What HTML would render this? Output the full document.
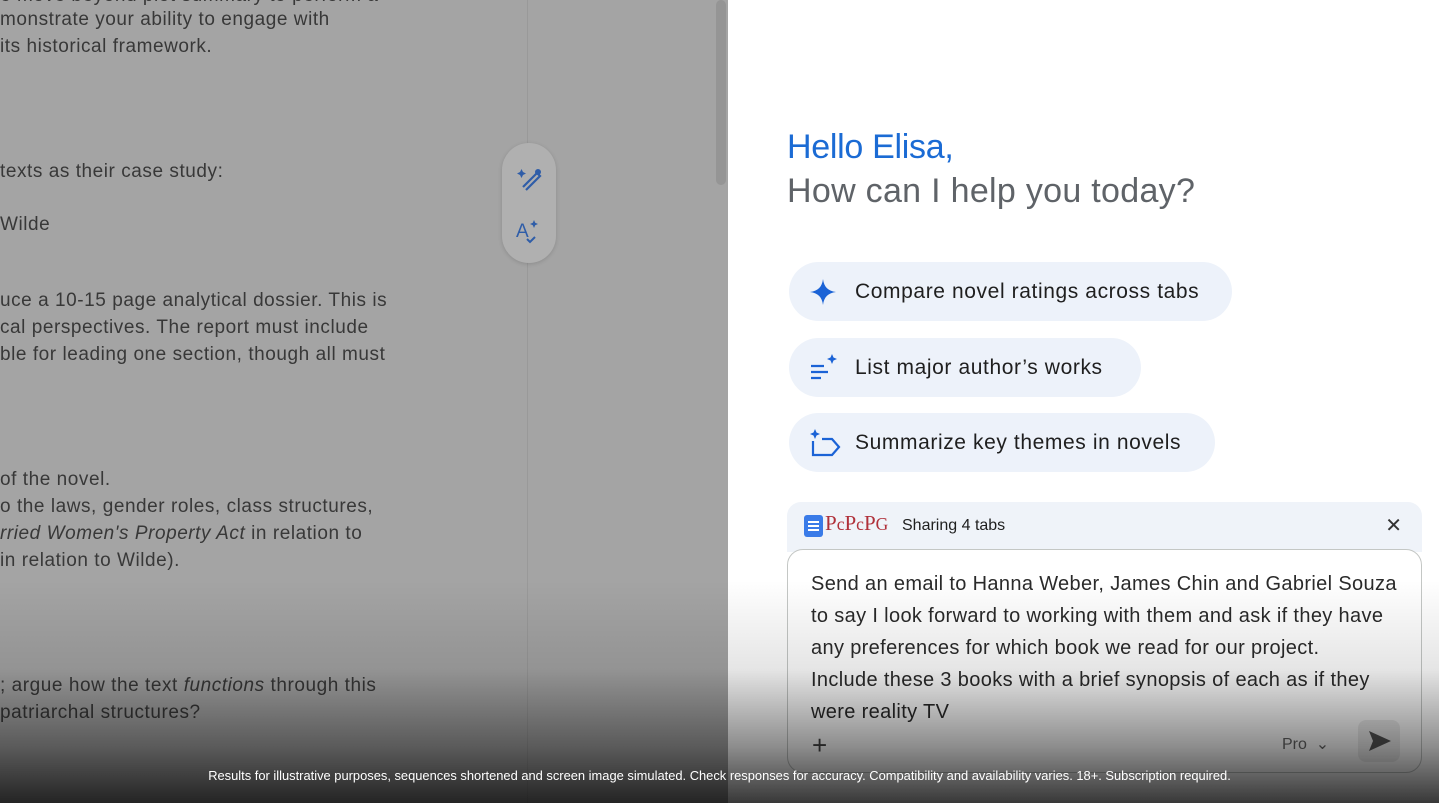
<!DOCTYPE html>
<html><head><meta charset="utf-8"><style>
*{margin:0;padding:0;box-sizing:border-box}
body{width:1439px;height:803px;overflow:hidden;position:relative;background:#fff;font-family:"Liberation Sans",Arial,sans-serif}
#left{position:absolute;left:0;top:0;width:728px;height:803px;background:#a4a4a4}
#left .sep{position:absolute;left:527px;top:0;width:1px;height:803px;background:#999}
#left .sb{position:absolute;left:716px;top:0;width:10px;height:185px;background:#959595;border-radius:5px}
.lt{position:absolute;left:0;font-size:19px;letter-spacing:.55px;color:#383838;white-space:nowrap;line-height:20px}
#tools{position:absolute;left:502px;top:143px;width:54px;height:120px;background:#b0b0b0;border-radius:27px;box-shadow:0 1px 4px rgba(0,0,0,.15)}
#right{position:absolute;left:728px;top:0;width:711px;height:803px;background:#fff}
h1{position:absolute;left:787px;top:128px;font-size:34px;font-weight:400;color:#1b6bd4;letter-spacing:-.3px}
h2{position:absolute;left:787px;top:172px;font-size:34px;font-weight:400;color:#5f6368;letter-spacing:.3px}
.chip{position:absolute;left:789px;height:59px;background:#edf2fa;border-radius:30px;font-size:21px;letter-spacing:.6px;color:#1f1f1f;display:flex;align-items:center;padding-left:66px}
.chip svg{position:absolute;left:20px;top:16px}
#share{position:absolute;left:787px;top:502px;width:635px;height:50px;background:#eff3f9;border-radius:14px 14px 0 0;font-size:16px;color:#1f1f1f}
#box{position:absolute;left:787px;top:549px;width:635px;height:224px;border:1px solid #c4c7c5;border-radius:16px;background:#fff}
#box p{position:absolute;left:23px;top:18px;font-size:20px;letter-spacing:.35px;line-height:32px;color:#2a2a2a;white-space:nowrap}
#shade{position:absolute;left:0;top:580px;width:1439px;height:223px;background:linear-gradient(to bottom,rgba(0,0,0,0) 0%,rgba(0,0,0,.1) 40%,rgba(0,0,0,.45) 75%,rgba(0,0,0,.78) 100%)}
#foot{position:absolute;left:0;top:768px;width:1439px;text-align:center;color:#fff;font-size:12.9px}
</style></head><body>
<div id="left">
<div class="sep"></div><div class="sb"></div>
<div class="lt" style="top:-14px">e move beyond plot summary to perform a</div>
<div class="lt" style="top:10px">monstrate your ability to engage with</div>
<div class="lt" style="top:37px">its historical framework.</div>
<div class="lt" style="top:162px">texts as their case study:</div>
<div class="lt" style="top:215px">Wilde</div>
<div class="lt" style="top:291px">uce a 10-15 page analytical dossier. This is</div>
<div class="lt" style="top:318px">cal perspectives. The report must include</div>
<div class="lt" style="top:345px">ble for leading one section, though all must</div>
<div class="lt" style="top:470px">of the novel.</div>
<div class="lt" style="top:497px">o the laws, gender roles, class structures,</div>
<div class="lt" style="top:524px"><i>rried Women's Property Act</i> in relation to</div>
<div class="lt" style="top:551px">in relation to Wilde).</div>
<div class="lt" style="top:676px">; argue how the text <i>functions</i> through this</div>
<div class="lt" style="top:703px">patriarchal structures?</div>
<div id="tools">
<svg style="position:absolute;left:14px;top:20px" width="28" height="28" viewBox="0 0 28 28"><path d="M7 24 L21 10 L24 13 L10 27" fill="none" stroke="#2f5da8" stroke-width="2.2"/><path d="M4 6l1.5-3 1.5 3 3 1.5-3 1.5-1.5 3-1.5-3-3-1.5z" fill="#2f5da8" transform="translate(0,3)"/><circle cx="22" cy="9" r="3" fill="#2f5da8"/></svg>
<svg style="position:absolute;left:12px;top:74px" width="30" height="30" viewBox="0 0 30 30"><text x="2" y="20" font-size="19" font-family="Liberation Sans" fill="#2f5da8">A</text><path d="M20 3l1.2 2.8 2.8 1.2-2.8 1.2-1.2 2.8-1.2-2.8-2.8-1.2 2.8-1.2z" fill="#2f5da8"/><path d="M13 22l3 3 5-5" fill="none" stroke="#2f5da8" stroke-width="2"/></svg>
</div>
</div>
<div id="right"></div>
<h1>Hello Elisa,</h1>
<h2>How can I help you today?</h2>
<div class="chip" style="top:262px;width:443px"><svg width="28" height="28" viewBox="0 0 28 28"><path d="M14 1 C15 9 19 13 27 14 C19 15 15 19 14 27 C13 19 9 15 1 14 C9 13 13 9 14 1Z" fill="#1b63d6"/></svg>Compare novel ratings across tabs</div>
<div class="chip" style="top:338px;width:352px"><svg width="30" height="30" viewBox="0 0 30 30"><path d="M2 12h13M2 18h17M2 24h10" stroke="#1b63d6" stroke-width="2.2"/><path d="M23 0l1.5 3.5 3.5 1.5-3.5 1.5-1.5 3.5-1.5-3.5-3.5-1.5 3.5-1.5z" fill="#1b63d6"/></svg>List major author’s works</div>
<div class="chip" style="top:413px;width:426px"><svg width="32" height="30" viewBox="0 0 32 30"><path d="M4 12v14h19l7-8-7-8h-10" fill="none" stroke="#1b63d6" stroke-width="2.2"/><path d="M6 0l1.5 3.5 3.5 1.5-3.5 1.5-1.5 3.5-1.5-3.5-3.5-1.5 3.5-1.5z" fill="#1b63d6"/></svg>Summarize key themes in novels</div>
<div id="share">
<div style="position:absolute;left:17px;top:13px;width:19px;height:22px;background:#3a7be8;border-radius:3px"><div style="margin:6px 4px;height:2px;background:#fff;box-shadow:0 4px 0 #fff,0 8px 0 #fff"></div></div>
<div style="position:absolute;left:38px;top:9px;font-family:'Liberation Serif',serif;font-size:21px;color:#b0303a;letter-spacing:0px">P<small>c</small>P<small>c</small>P<small>G</small></div>
<div style="position:absolute;left:115px;top:15px">Sharing 4 tabs</div>
<div style="position:absolute;right:20px;top:11px;font-size:20px;color:#333">✕</div>
</div>
<div id="box"><p>Send an email to Hanna Weber, James Chin and Gabriel Souza<br>to say I look forward to working with them and ask if they have<br>any preferences for which book we read for our project.<br>Include these 3 books with a brief synopsis of each as if they<br>were reality TV</p>
<div style="position:absolute;left:24px;top:180px;font-size:26px;color:#444;font-weight:300">+</div>
<div style="position:absolute;left:494px;top:184px;font-size:16px;color:#666">Pro &nbsp;⌄</div>
<div style="position:absolute;left:570px;top:170px;width:42px;height:42px;background:#ececec;border-radius:8px"><svg style="margin:10px" width="24" height="22" viewBox="0 0 24 22"><path d="M1 1 L23 11 L1 21 L5 11Z" fill="#555"/></svg></div>
</div>
<div id="shade"></div>
<div id="foot">Results for illustrative purposes, sequences shortened and screen image simulated. Check responses for accuracy. Compatibility and availability varies. 18+. Subscription required.</div>
</body></html>
